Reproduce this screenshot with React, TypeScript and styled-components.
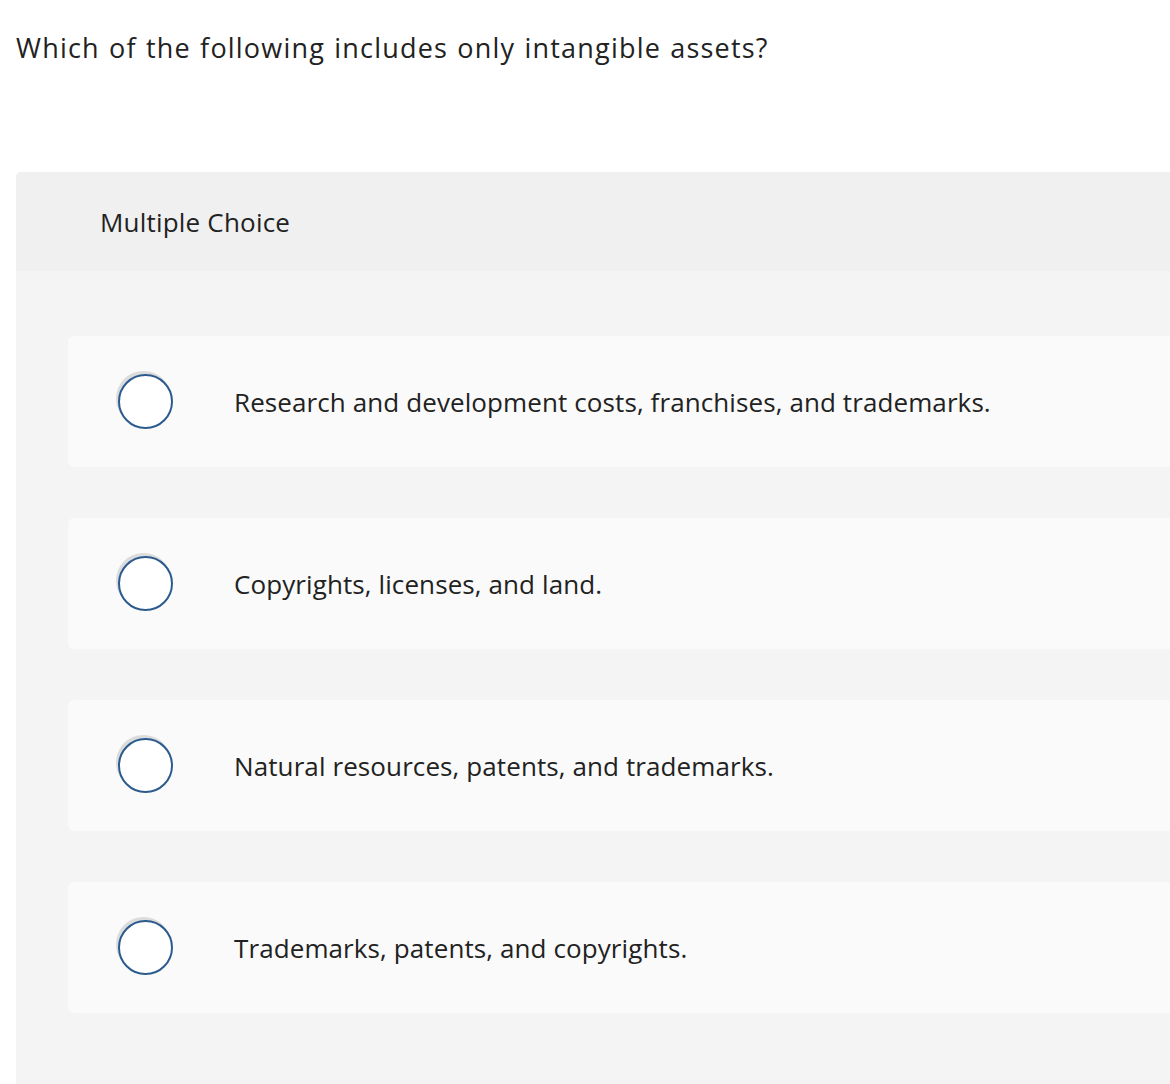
import React from "react";
import styled, { createGlobalStyle } from "styled-components";

const Global = createGlobalStyle`
  html, body { margin: 0; padding: 0; background: #ffffff; overflow: hidden; }
  body { font-family: "Open Sans", Lato, Arial, sans-serif; color: #222222; }
`;

const Page = styled.div`
  width: 1170px;
  height: 1084px;
  overflow: hidden;
`;

const Question = styled.h1`
  margin: 31px 0 0 16px;
  font-size: 27px;
  line-height: 34px;
  font-weight: 400;
  letter-spacing: 1.2px;
  word-spacing: 1px;
  color: #222222;
  white-space: nowrap;
`;

const Panel = styled.section`
  margin: 107px 0 0 16px;
  width: 1200px;
  min-height: 920px;
  background: #f4f4f4;
  border-top-left-radius: 5px;
  overflow: hidden;
`;

const PanelHeader = styled.div`
  height: 99px;
  display: flex;
  align-items: center;
  padding-left: 84px;
  background: #f0f0f0;
  font-size: 26px;
  letter-spacing: 0.2px;
  color: #222222;
`;

const Choices = styled.div`
  display: flex;
  flex-direction: column;
  gap: 51px;
  padding: 65px 0 0 52px;
`;

const Card = styled.label`
  display: flex;
  align-items: center;
  height: 131px;
  padding-left: 50px;
  background: #fafafa;
  border-radius: 6px 0 0 6px;
  cursor: pointer;
`;

const Radio = styled.span`
  flex: none;
  box-sizing: border-box;
  width: 55px;
  height: 55px;
  border-radius: 50%;
  border: 2px solid #2b5b8e;
  background: #ffffff;
  box-shadow: -2px -3px 0 0 #dcdcdc;
`;

const ChoiceText = styled.span`
  margin-left: 61px;
  font-size: 26px;
  letter-spacing: 0.1px;
  color: #222222;
  white-space: nowrap;
`;

const choices = [
  "Research and development costs, franchises, and trademarks.",
  "Copyrights, licenses, and land.",
  "Natural resources, patents, and trademarks.",
  "Trademarks, patents, and copyrights.",
];

export default function App() {
  return (
    <Page>
      <Global />
      <Question>Which of the following includes only intangible assets?</Question>
      <Panel>
        <PanelHeader>Multiple Choice</PanelHeader>
        <Choices>
          {choices.map((c) => (
            <Card key={c}>
              <Radio />
              <ChoiceText>{c}</ChoiceText>
            </Card>
          ))}
        </Choices>
      </Panel>
    </Page>
  );
}
